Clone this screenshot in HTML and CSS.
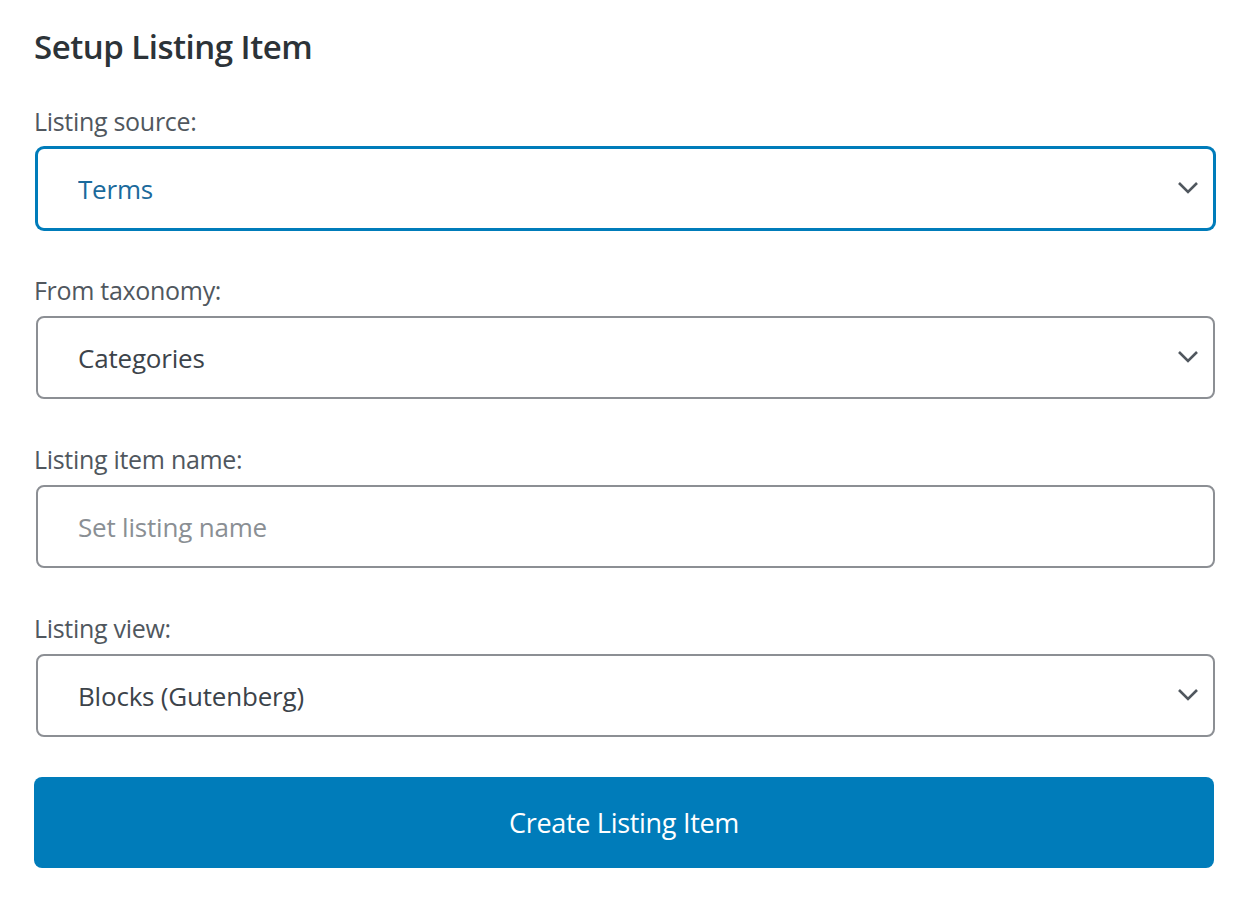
FILE: index.html
```html
<!DOCTYPE html>
<html lang="en">
<head>
  <meta charset="UTF-8">
  <title>Setup Listing Item</title>
  <link rel="stylesheet" href="styles.css">
</head>
<body>
  <div class="setup-box">
    <h2>Setup Listing Item</h2>

    <div class="field">
      <label for="listingSource">Listing source:</label>
      <div class="select-wrap">
        <select id="listingSource" class="control is-focused">
          <option>Terms</option>
          <option>Posts</option>
          <option>Users</option>
        </select>
        <svg class="chevron" viewBox="0 0 22 14"><path d="M2 2 L11 11 L20 2"/></svg>
      </div>
    </div>

    <div class="field">
      <label for="fromTaxonomy">From taxonomy:</label>
      <div class="select-wrap">
        <select id="fromTaxonomy" class="control">
          <option>Categories</option>
          <option>Tags</option>
        </select>
        <svg class="chevron" viewBox="0 0 22 14"><path d="M2 2 L11 11 L20 2"/></svg>
      </div>
    </div>

    <div class="field">
      <label for="itemName">Listing item name:</label>
      <input type="text" id="itemName" class="control" placeholder="Set listing name">
    </div>

    <div class="field field-last">
      <label for="listingView">Listing view:</label>
      <div class="select-wrap">
        <select id="listingView" class="control">
          <option>Blocks (Gutenberg)</option>
          <option>Elementor</option>
        </select>
        <svg class="chevron" viewBox="0 0 22 14"><path d="M2 2 L11 11 L20 2"/></svg>
      </div>
    </div>

    <button class="create-btn">Create Listing Item</button>
  </div>
</body>
</html>
```

FILE: styles.css
```css
body {
  margin: 0;
  background: #fff;
  font-family: "Open Sans", "Noto Sans", sans-serif;
  color: #1d2327;
}

.setup-box {
  padding: 25px 31px 0 34px;
  display: flex;
  flex-direction: column;
}

h2 {
  font-size: 33px;
  font-weight: 600;
  margin: 0 0 35px;
  line-height: 44px;
  letter-spacing: -0.5px;
  color: #2c3338;
}

.field {
  display: flex;
  flex-direction: column;
  margin-bottom: 43px;
}

.field-last {
  margin-bottom: 40px;
}

.field label {
  font-size: 25px;
  line-height: 34px;
  color: #50575e;
  margin-bottom: 9px;
  letter-spacing: -0.3px;
}

.select-wrap {
  position: relative;
}

.control {
  display: block;
  box-sizing: border-box;
  width: calc(100% - 2px);
  margin-left: 2px;
  height: 83px;
  padding: 0 60px 0 40px;
  border: 2px solid #8c8f94;
  border-radius: 8px;
  background: #fff;
  font-family: inherit;
  font-size: 26px;
  color: #3c434a;
  letter-spacing: -0.2px;
  appearance: none;
  -webkit-appearance: none;
  outline: none;
}

.control::placeholder {
  color: #8a8f94;
}

.control.is-focused {
  border-color: #007cba;
  box-shadow: 0 0 0 1px #007cba;
  color: #1a6a9c;
}

.chevron {
  position: absolute;
  right: 16px;
  top: 34px;
  width: 22px;
  height: 14px;
  fill: none;
  stroke: #50575e;
  stroke-width: 2.6;
  pointer-events: none;
}

.create-btn {
  margin: 0 1px 0 0;
  height: 91px;
  border: none;
  border-radius: 8px;
  background: #007cba;
  color: #fff;
  font-family: inherit;
  font-size: 27px;
  font-weight: 500;
  letter-spacing: -0.3px;
  cursor: pointer;
}
```
